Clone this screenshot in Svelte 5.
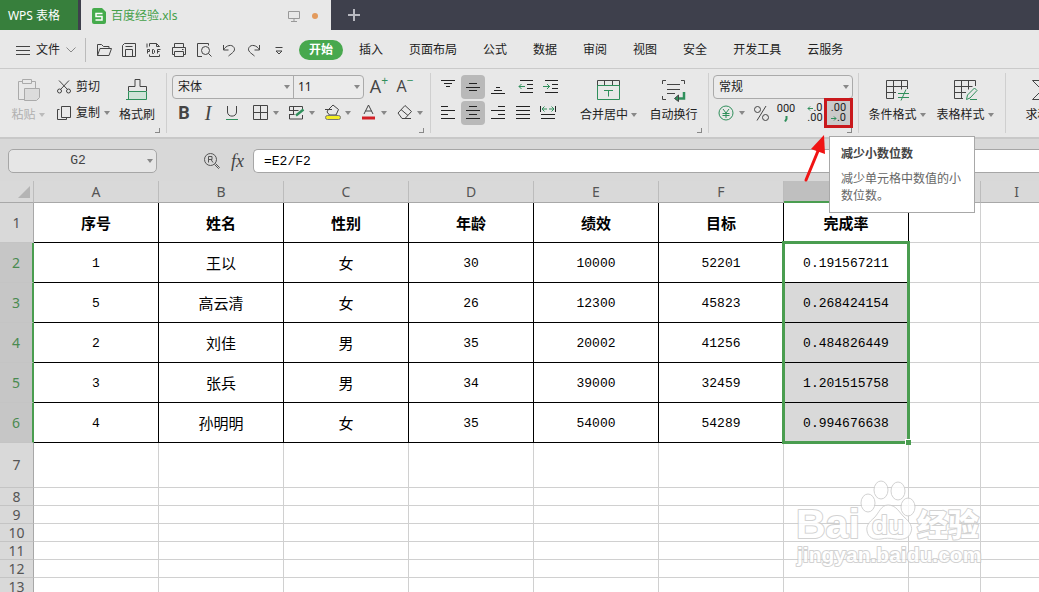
<script>
  const menus = ['插入', '页面布局', '公式', '数据', '审阅', '视图', '安全', '开发工具', '云服务'];

  const quickTools = [
    ['open', '打开'],
    ['save', '保存'],
    ['pdf', '输出为PDF'],
    ['print', '打印'],
    ['preview', '打印预览'],
    ['undo', '撤销'],
    ['redo', '恢复'],
    ['more', '自定义']
  ];

  const columns = ['A', 'B', 'C', 'D', 'E', 'F', 'G', 'H', 'I'];

  const rows = [
    ['序号', '姓名', '性别', '年龄', '绩效', '目标', '完成率'],
    ['1', '王以', '女', '30', '10000', '52201', '0.191567211'],
    ['5', '高云清', '女', '26', '12300', '45823', '0.268424154'],
    ['2', '刘佳', '男', '35', '20002', '41256', '0.484826449'],
    ['3', '张兵', '男', '34', '39000', '32459', '1.201515758'],
    ['4', '孙明明', '女', '35', '54000', '54289', '0.994676638'],
    [], [], [], [], [], [], []
  ];

  let cellName = $state('G2');
  let formula = $state('=E2/F2');

  const g = 'stroke="#2f8f5b"';
  const icons = {
    menu: '<path d="M1 4.500h14M1 8.500h14M1 12.500h14"/>',
    open: '<path d="M1.500 13.500v-11h4l2 2h5.500v2M1.500 13.500l2.500-7h11.500l-2.500 7z"/>',
    save: '<path d="M1.500 14.500v-11l2-2h11v13zM4.500 14.500v-7h7v7M4.500 4.500h7"/>',
    pdf: '<path d="M3.500 4.500v-3h7l3 3M10.500 1.500v3h3M1 1.500v4M3.500 12.500v2h10v-2M1.500 11.500v-4h2v2h-2M6.500 7.500v4h1l1-1v-2l-1-1zM11.500 11.500v-4h3M11.500 9.500h2"/>',
    print: '<path d="M3.500 5.500v-4h9v4M3.500 12.500h-2v-7h13v7h-2M3.500 9.500h9v5h-9zM11 7.500h1.500"/>',
    preview: '<path d="M6 14.500h-4.500v-13h11v2M12.500 11.500l3 3"/><circle cx="9.500" cy="8.500" r="4"/>',
    undo: '<path d="M2.500 3v5h5M2.500 8C5 3 11 2 13 5.500S11 11 7.500 14"/>',
    redo: '<path d="M13.500 3v5h-5M13.500 8C11 3 5 2 3 5.500S5 11 8.500 14"/>',
    more: '<path d="M4.500 5.500h7M5 9l3 3 3-3z"/>',
    cut: '<path d="M3 1.500l8.500 9M13 1.500l-8.500 9"/><circle cx="3.500" cy="12" r="2"/><circle cx="12.500" cy="12" r="2"/>',
    copy: '<path d="M5.500 1.500h9v11h-9zM3.500 4.500h-2v10h9v-2"/>',
    under: `<path d="M3.500 1v6c0 5.500 9 5.500 9 0V1"/><path d="M2 14.500h12" ${g}/>`,
    grid: '<path d="M1.500 1.500h14v14h-14zM8.500 1.500v14M1.500 8.500h14"/>',
    drawgrid: `<path d="M1.500 7V2.500h13V5M1.500 10v5h13v-4M1.500 6.500h9M1.500 10.500h5M5.500 2.500v8"/><path d="M8 11.500l7.500-6" ${g} stroke-width="2.500"/>`,
    fill: '<path d="M4 6l5-5 5.500 4.500-2.500 5.500h-6.500L3 8zM1 5.500h7"/><rect x="1.500" y="11.500" width="15" height="4" rx="2" fill="#f4ee22" stroke="#777"/>',
    color: '<path d="M4 10l4.500-9 4.500 9M5.500 7h6"/><path d="M2 14h13" stroke="#d21f26" stroke-width="3"/>',
    erase: '<path d="M2 9l7-7.500 6.500 6-6.500 7h-3zM5 5.500l7 6M7 14.500h8"/>',
    atop: '<path d="M1 1.500h14M4 4.500h8M6 7.500h4" stroke="#222"/>',
    amid: '<path d="M4 4.500h8M1 8.500h14M4 11.500h8" stroke="#222"/>',
    abot: '<path d="M6 8.500h4M4 11.500h8M1 14.500h14" stroke="#222"/>',
    aleft: '<path d="M1 1.500h7M1 5.500h14M1 9.500h7M1 13.500h14" stroke="#222"/>',
    acenter: '<path d="M4 1.500h8M1 5.500h14M4 9.500h8M1 13.500h14" stroke="#222"/>',
    aright: '<path d="M8 1.500h7M1 5.500h14M8 9.500h7M1 13.500h14" stroke="#222"/>',
    ajust: '<path d="M1 1.500h14M1 5.500h14M1 9.500h14M1 13.500h14" stroke="#222"/>',
    outdent: `<path d="M2 1.500h13M9 5.500h6M9 9.500h6M2 13.500h13" stroke="#222"/><path d="M1 7.500h6M3.500 5l-2.500 2.500 2.500 2.500" ${g}/>`,
    indent: `<path d="M2 1.500h13M9 5.500h6M9 9.500h6M2 13.500h13" stroke="#222"/><path d="M0 7.500h7M4 5l2.500 2.500-2.500 2.500" ${g}/>`,
    spread: `<path d="M.5 1v6M15.500 1v6M1 9.500h14M1 13.500h14" stroke="#222"/><path d="M2 4h5M9 4h5M4.500 1.500l-2.500 2.500 2.500 2.500M11.500 1.500l2.500 2.500-2.500 2.500" ${g}/>`,
    yuan: `<circle cx="8" cy="8" r="7" ${g}/><path d="M5 4l3 4 3-4M4.500 8.500h7M4.500 10.500h7M8 8v5" ${g}/>`,
    percent: '<circle cx="4.500" cy="4.500" r="3"/><circle cx="12.500" cy="12.500" r="3"/><path d="M13 1L4 15.500"/>'
  };

  const bigIcons = {
    paste: '<g stroke="#aaa"><path d="M7 4.500H3.500v18H9M17 4.500h3.500V11M7.500 2.500h9v4h-9z"/><path d="M9.500 11.500h15v9l-3 3h-12z" fill="#dcdcdc"/></g>',
    brush: `<path d="M4.500 14v-4.500h6.500V2.500h5v7h6.500V14"/><path d="M4.500 14.500h18v8h-18z" fill="#cfe3d8" ${g}/><path d="M2 22.500h8" ${g}/>`,
    merge: `<path d="M2.500 9V3.500h22V9M9.500 3.500v5M17.500 3.500v5"/><path d="M2.500 8.500h22v14h-22zM9 13.500h9M13.500 13.500v6" ${g}/>`,
    wrap: `<path d="M2.500 7V3.500H6M21 3.500h3.500V7M2.500 19v3.500H6M7 7.500h13M7 12.500h13M7 16.500h8"/><path d="M24 15v6.500h-8" ${g} stroke-width="2.500"/><path d="M18.500 18l-4 3.500 4 3z" fill="#2f8f5b"/>`,
    cond: `<path d="M10 21.500H2.500V3.500h21V12M2.500 9.500h21M2.500 15.500H12M9.500 3.500v18M17.500 3.500v9"/><path d="M14 16.500h11M14 20.500h11M22 12.500l-5 11" ${g}/>`,
    style: `<path d="M11 21.500H2.500V3.500h21V9M2.500 9.500h18M2.500 15.500H14M9.500 3.500v18M16.500 3.500v9"/><path d="M14.500 22.500l1-4.500 7-7 2.500 2.500-7 7.500zM18 22.500h7" ${g}/>`,
    sum: '<path d="M23.500 6V3.500H3.500L13 13 3.500 22.500h20V20"/>'
  };
</script>

{#snippet icon(name, size = 16)}
  <svg class="icon" width={size} height={size} viewBox="0 0 {size} {size}" aria-hidden="true">{@html icons[name]}</svg>
{/snippet}

{#snippet caret()}<span class="caret" aria-hidden="true"></span>{/snippet}

{#snippet big(name, label, drop = true, disabled = false)}
  <button class="big" {disabled}>
    <svg class="icon" width="27" height="26" viewBox="0 0 27 26" aria-hidden="true">{@html bigIcons[name]}</svg>
    <span class="label">{label}{#if drop}{@render caret()}{/if}</span>
  </button>
{/snippet}

<div class="app">
  <header class="tabs">
    <button class="brand">WPS 表格</button>
    <div class="doc">
      <svg width="14" height="16" viewBox="0 0 14 16" aria-hidden="true">
        <path d="M2 0h8l4 4v10a2 2 0 0 1-2 2H2a2 2 0 0 1-2-2V2a2 2 0 0 1 2-2z" fill="#45ab4c" />
        <path d="M10.500 5.500H4v3h6v3.500H3.500" fill="none" stroke="#fff" stroke-width="1.500" />
      </svg>
      <span class="doc-name">百度经验.xls</span>
      <svg width="12" height="12" viewBox="0 0 12 12" fill="none" stroke="#999" aria-hidden="true">
        <path d="M.5 1.500h11v7H.5zM6 8.500v3M3 11.500h6" />
      </svg>
      <span class="dot"></span>
    </div>
    <button class="plus" aria-label="新建">
      <svg width="12" height="12" viewBox="0 0 12 12" aria-hidden="true"><path d="M6 0v12M0 6h12" stroke="#b8b9c0" stroke-width="2" /></svg>
    </button>
  </header>

  <nav class="menu">
    <button class="file">
      {@render icon('menu')}
      <span>文件</span>
      <svg width="10" height="6" viewBox="0 0 10 6" fill="none" stroke="#888" aria-hidden="true"><path d="M.5.500l4.500 4.500L9.500.500" /></svg>
    </button>
    <div class="quick">
      {#each quickTools as [name, label]}
        <button aria-label={label}>{@render icon(name)}</button>
      {/each}
    </div>
    <button class="pill">开始</button>
    {#each menus as item}
      <button class="item">{item}</button>
    {/each}
  </nav>

  <section class="ribbon">
    <div class="group clipboard">
      {@render big('paste', '粘贴', true, true)}
      <div class="stack">
        <div class="line"><button class="text">{@render icon('cut')}剪切</button></div>
        <div class="line"><button class="text">{@render icon('copy')}复制{@render caret()}</button></div>
      </div>
      {@render big('brush', '格式刷', false)}
      <span class="launch"></span>
    </div>

    <div class="group font">
      <div class="stack">
        <div class="line">
          <div class="combo pair">
            <span class="field name"><select aria-label="字体"><option>宋体</option></select>{@render caret()}</span>
            <span class="field size"><select aria-label="字号"><option>11</option></select>{@render caret()}</span>
          </div>
          <button class="tool grow" aria-label="增大字号">A<sup>+</sup></button>
          <button class="tool grow" aria-label="减小字号">A<sup>−</sup></button>
        </div>
        <div class="line">
          <button class="tool bold" aria-label="加粗">B</button>
          <button class="tool italic" aria-label="倾斜">I</button>
          <button class="tool" aria-label="下划线">{@render icon('under')}</button>
          <div class="splits">
            {#each [['grid', '边框'], ['drawgrid', '绘图边框'], ['fill', '填充颜色'], ['color', '字体颜色'], ['erase', '清除']] as [name, label]}
              <button class="split" aria-label={label}>{@render icon(name, 18)}{@render caret()}</button>
            {/each}
          </div>
        </div>
      </div>
      <span class="launch"></span>
    </div>

    <div class="group align">
      <div class="stack">
        <div class="line">
          <button class="tool" aria-label="顶端对齐">{@render icon('atop')}</button>
          <button class="tool on" aria-label="垂直居中">{@render icon('amid')}</button>
          <button class="tool" aria-label="底端对齐">{@render icon('abot')}</button>
          <div class="indents">
            <button class="tool" aria-label="减少缩进">{@render icon('outdent')}</button>
            <button class="tool" aria-label="增加缩进">{@render icon('indent')}</button>
          </div>
        </div>
        <div class="line">
          <button class="tool" aria-label="左对齐">{@render icon('aleft')}</button>
          <button class="tool on" aria-label="水平居中">{@render icon('acenter')}</button>
          <button class="tool" aria-label="右对齐">{@render icon('aright')}</button>
          <button class="tool" aria-label="两端对齐">{@render icon('ajust')}</button>
          <button class="tool" aria-label="分散对齐">{@render icon('spread')}</button>
        </div>
      </div>
      <div class="bigs">
        {@render big('merge', '合并居中')}
        {@render big('wrap', '自动换行', false)}
      </div>
      <span class="launch"></span>
    </div>

    <div class="group number">
      <div class="stack">
        <div class="line">
          <div class="combo single">
            <span class="field"><select aria-label="数字格式"><option>常规</option></select>{@render caret()}</span>
          </div>
        </div>
        <div class="line">
          <button class="split" aria-label="货币">{@render icon('yuan')}{@render caret()}</button>
          <button class="tool" aria-label="百分比">{@render icon('percent', 17)}</button>
          <button class="digits" aria-label="千位分隔">
            <span>000</span>
            <svg width="6" height="9" viewBox="0 0 6 9" aria-hidden="true"><path d="M3.500 2v3L2 7.500" stroke-width="2" /></svg>
          </button>
          <button class="digits add" aria-label="增加小数位数">
            <span><svg width="6" height="7" viewBox="0 0 6 7" aria-hidden="true"><path d="M6 3.500H1M3 1.500l-2 2 2 2" /></svg>.0</span><span>.00</span>
          </button>
          <div class="marked">
            <button class="digits" aria-label="减少小数位数" aria-describedby="tip">
              <span>.00</span><span><svg width="6" height="7" viewBox="0 0 6 7" aria-hidden="true"><path d="M0 3.500h5M3 1.500l2 2-2 2" /></svg>.0</span>
            </button>
            <svg class="pointer" width="24" height="50" viewBox="0 0 24 50" aria-hidden="true">
              <path d="M3 46L15 17" stroke="#f01414" stroke-width="3" stroke-linecap="round" />
              <path d="M21 1L8 15l14 5z" fill="#f01414" />
            </svg>
            <div class="tip" id="tip" role="tooltip">
              <strong>减少小数位数</strong>
              <p>减少单元格中数值的小数位数。</p>
            </div>
          </div>
        </div>
      </div>
      <span class="launch"></span>
    </div>

    <div class="group styles">
      {@render big('cond', '条件格式')}
      {@render big('style', '表格样式')}
    </div>
    <div class="group last">
      {@render big('sum', '求和')}
    </div>
  </section>

  <section class="formula">
    <div class="cell-name">
      <input aria-label="名称框" bind:value={cellName} />
      {@render caret()}
    </div>
    <div class="fx">
      <button aria-label="查找">
        <svg width="18" height="18" viewBox="0 0 18 18" fill="none" stroke="#555" aria-hidden="true">
          <circle cx="7.500" cy="7.500" r="6" /><path d="M5.500 10.500v-6h3.500v3H5.500M8 7.500l2 3M12.500 11.500l4 4-1 1-4-4" />
        </svg>
      </button>
      <button class="fn" aria-label="插入函数">fx</button>
    </div>
    <input class="expr" aria-label="编辑栏" bind:value={formula} />
  </section>

  <main class="sheet">
    <table>
      <colgroup>
        <col class="c-index" />
        {#each columns as col, i}
          <col class={i < 7 ? 'c-wide' : i === 7 ? 'c-slim' : ''} />
        {/each}
      </colgroup>
      <thead>
        <tr>
          <th class="corner"><svg width="12" height="12" viewBox="0 0 12 12" aria-hidden="true"><path d="M12 0v12H0z" fill="#b4b4b4" /></svg></th>
          {#each columns as col}
            <th scope="col" class:picked={col === 'G'}>{col}</th>
          {/each}
        </tr>
      </thead>
      <tbody>
        {#each rows as row, r}
          <tr class={r < 6 ? 'data' : r === 6 ? 'tall' : 'plain'} class:title={r === 0}>
            <th scope="row" class:picked={r > 0 && r < 6}>{r + 1}</th>
            {#each columns as col, c}
              <td class:ruled={r < 6 && c < 7} class:shade={c === 6 && r > 1 && r < 6} class:cjk={c === 1 || c === 2}>
                {row[c] ?? ''}
                {#if r === 1 && c === 6}<span class="selection"></span>{/if}
              </td>
            {/each}
          </tr>
        {/each}
      </tbody>
    </table>

    <svg class="mark" width="190" height="92" viewBox="0 0 190 92" aria-hidden="true">
      <g fill="#fff" stroke="#c8c8c8">
        <ellipse cx="73" cy="23" rx="7" ry="9" />
        <ellipse cx="86" cy="10" rx="7" ry="9" />
        <ellipse cx="103" cy="11" rx="7" ry="9" />
        <ellipse cx="113" cy="27" rx="7" ry="9" />
        <path d="M93 25c8 0 11 7 16 12 6 5 9 10 7 15-2 7-9 8-16 7-5-1-10-1-14 0-7 1-13-1-14-8-1-5 2-9 7-13 5-5 7-13 14-13z" />
        <text class="mark-main" x="1" y="58">Bai</text>
        <text class="mark-du" x="77" y="54">du</text>
        <text class="mark-cn" x="122" y="56">经验</text>
        <text class="mark-url" x="2" y="82">jingyan.baidu.com</text>
      </g>
    </svg>
  </main>
</div>

<style>
  :global(body) {
    margin: 0;
  }

  .app {
    display: flex;
    flex-direction: column;
    height: 100vh;
    overflow: hidden;
    color: #222;
    background: #fff;
    font: 12px/16px 'Noto Sans', 'Noto Sans CJK SC', sans-serif;
  }

  button, input, select {
    margin: 0;
    padding: 0;
    border: 0;
    border-radius: 0;
    background: none;
    color: inherit;
    font: inherit;
    white-space: nowrap;
  }

  button {
    display: flex;
    flex: none;
    align-items: center;
    justify-content: center;
  }

  svg {
    display: block;
    flex: none;
  }

  .icon {
    fill: none;
    stroke: #444;
  }

  .caret {
    flex: none;
    border: 3px solid transparent;
    border-top: 4px solid #888;
    border-bottom: 0;
  }

  /* Title bar */
  .tabs {
    display: flex;
    flex: none;
    height: 30px;
    background: #3e404c;
  }

  .brand {
    width: 78px;
    padding: 2px 10px 0 0;
    background: #377f3c;
    color: #fff;
  }

  .doc {
    display: flex;
    align-items: center;
    gap: 12px;
    width: 250px;
    box-sizing: border-box;
    margin-left: 3px;
    padding: 2px 13px 0 11px;
    background: #e8e8e8;
    color: #45a04a;
  }

  .doc-name {
    flex: 1;
    margin-left: -7px;
  }

  .dot {
    width: 6px;
    height: 6px;
    border-radius: 50%;
    background: #e39a5c;
  }

  .plus {
    width: 45px;
  }

  /* Menu bar */
  .menu {
    display: flex;
    flex: none;
    align-items: center;
    box-sizing: border-box;
    height: 38px;
    padding-top: 2px;
    background: #e8e8e8;
  }

  .file {
    gap: 5px;
    height: 24px;
    padding: 0 9px 0 15px;
    border-right: 1px solid #bbb;
  }

  .file span {
    margin-right: 1px;
  }

  .quick {
    display: flex;
    padding: 0 8px 0 5px;
  }

  .quick button {
    width: 25px;
    height: 24px;
  }

  .pill {
    width: 44px;
    height: 20px;
    margin-right: 3px;
    border-radius: 10px;
    background: #48a84e;
    color: #fff;
    font-weight: bold;
  }

  .item {
    height: 24px;
    padding: 0 13px;
  }

  /* Ribbon */
  .ribbon {
    position: relative;
    z-index: 2;
    display: flex;
    flex: none;
    height: 68px;
    border-top: 1px solid #cacaca;
    border-bottom: 2px solid #c8c8c8;
    background: #e8e8e8;
  }

  .group {
    position: relative;
    display: flex;
    flex: none;
    box-sizing: border-box;
  }

  .group:not(.last)::after {
    content: '';
    position: absolute;
    top: 4px;
    right: 0;
    bottom: 4px;
    width: 1px;
    background: #cfcfcf;
  }

  .clipboard {
    width: 167px;
    padding-left: 9px;
  }

  .font {
    width: 264px;
    padding-left: 5px;
  }

  .align {
    width: 278px;
    padding-left: 5px;
  }

  .number {
    width: 150px;
    padding-left: 4px;
  }

  .styles {
    width: 147px;
    padding-left: 4px;
  }

  .last {
    padding-left: 2px;
  }

  .launch {
    position: absolute;
    right: 7px;
    bottom: 4px;
    width: 4px;
    height: 4px;
    border: solid #888;
    border-width: 0 1px 1px 0;
  }

  .big {
    flex-direction: column;
    justify-content: flex-start;
    min-width: 38px;
    padding-top: 8px;
  }

  .big .label {
    display: flex;
    align-items: center;
    gap: 3px;
    height: 24px;
  }

  .big:disabled {
    color: #b0b0b0;
  }

  .big:disabled .caret {
    border-top-color: #bbb;
  }

  .clipboard .stack {
    width: 54px;
    padding: 5px 8px 0 9px;
  }

  .align .big,
  .styles .big,
  .last .big {
    width: 68px;
  }

  .bigs {
    display: flex;
    margin-left: 13px;
  }

  .align .big {
    width: 65px;
  }

  .stack {
    padding-top: 5px;
  }

  .line {
    display: flex;
    align-items: center;
    height: 26px;
  }

  .text {
    gap: 4px;
  }

  .combo {
    display: flex;
    box-sizing: border-box;
    height: 24px;
    border: 1px solid #aaa;
    border-radius: 4px;
    background: #ebebeb;
  }

  .pair {
    width: 192px;
  }

  .single {
    width: 140px;
  }

  .field {
    display: flex;
    flex: 1;
    align-items: center;
    padding: 0 3px 0 5px;
  }

  .field select {
    flex: 1;
    min-width: 0;
    height: 22px;
    appearance: none;
    outline: none;
  }

  .field.name {
    flex: none;
    width: 112px;
  }

  .field.size {
    border-left: 1px solid #aaa;
    padding-left: 4px;
  }

  .tool {
    width: 24px;
    height: 24px;
  }

  .align .line {
    gap: 1px;
  }

  .indents {
    display: flex;
    gap: 1px;
    margin-left: 3px;
  }

  .tool.on {
    border-radius: 4px;
    background: #b9b9b9;
  }

  .grow {
    align-items: flex-start;
    width: 26px;
    margin-left: 2px;
    color: #444;
    font: 18px/22px 'Open Sans', sans-serif;
  }

  .grow + .grow {
    margin-left: 0;
    font-size: 16px;
  }

  .grow sup {
    color: #2f8f5b;
    font-size: 12px;
    line-height: 12px;
  }

  .bold {
    color: #444;
    font: bold 18px/20px Roboto, sans-serif;
  }

  .italic {
    color: #444;
    font: italic 20px/20px 'Liberation Serif', serif;
  }

  .splits {
    display: flex;
    margin-left: 8px;
  }

  .split {
    justify-content: flex-start;
    gap: 3px;
    width: 36px;
    height: 24px;
  }

  .number .split {
    gap: 5px;
    padding-left: 5px;
    width: 36px;
  }

  .digits {
    flex-direction: column;
    width: 26px;
    height: 24px;
    font: 11px/10px Roboto, sans-serif;
  }

  .digits span {
    display: flex;
    align-items: center;
  }

  .digits svg {
    fill: none;
    stroke: #2f8f5b;
  }

  .add {
    margin-left: 3px;
  }

  .marked {
    position: relative;
    display: flex;
    flex: none;
    margin-left: -4px;
  }

  .marked .digits {
    box-sizing: border-box;
    width: 29px;
    height: 30px;
    border: 3px solid #c9191d;
    background: #cacaca;
  }

  .pointer {
    position: absolute;
    top: 36px;
    right: 26px;
    fill: none;
  }

  .tip {
    position: absolute;
    top: 38px;
    left: 5px;
    box-sizing: border-box;
    width: 146px;
    padding: 8px 11px;
    border: 1px solid #a8a8a8;
    background: #fff;
    color: #666;
    line-height: 17px;
  }

  .tip strong {
    color: #444;
  }

  .tip p {
    margin: 8px 0 0;
  }

  /* Formula bar */
  .formula {
    display: flex;
    flex: none;
    align-items: center;
    height: 42px;
    padding-left: 8px;
    background: #d8d8d8;
    font: 13px/20px 'Liberation Mono', monospace;
  }

  .cell-name {
    display: flex;
    align-items: center;
    box-sizing: border-box;
    width: 149px;
    height: 24px;
    margin-top: 2px;
    padding: 0 3px 0 0;
    border: 1px solid #a6a6a6;
    border-radius: 5px;
    background: #e6e6e6;
  }

  .cell-name input {
    flex: 1;
    min-width: 0;
    color: #444;
    text-align: center;
  }

  .fx {
    display: flex;
    align-items: center;
    justify-content: flex-end;
    gap: 8px;
    width: 96px;
    box-sizing: border-box;
    padding: 2px 9px 0 0;
  }

  .fn {
    color: #444;
    font: italic 18px/20px 'Liberation Serif', serif;
  }

  .fx button:first-child {
    margin-right: 2px;
  }

  .expr {
    flex: 1;
    min-width: 0;
    box-sizing: border-box;
    height: 24px;
    margin-top: 2px;
    padding-left: 10px;
    border: 1px solid #a6a6a6;
    border-right: 0;
    border-radius: 5px 0 0 5px;
    background: #fff;
    color: #000;
  }

  /* Sheet */
  .sheet {
    position: relative;
    flex: 1;
    min-height: 0;
    overflow: hidden;
  }

  table {
    width: 100%;
    min-width: 1053px;
    table-layout: fixed;
    border-spacing: 0;
  }

  .c-index {
    width: 34px;
  }

  .c-wide {
    width: 125px;
  }

  .c-slim {
    width: 72px;
  }

  th, td {
    box-sizing: border-box;
    padding: 0;
    border: solid #d0d0d0;
    border-width: 0 1px 1px 0;
    text-align: center;
    vertical-align: middle;
  }

  th {
    background: #d9d9d9;
    color: #555;
    font: 14px/14px 'Noto Sans', sans-serif;
  }

  thead th {
    height: 22px;
    border-color: #bcbcbc;
    border-bottom-color: #a8a8a8;
  }

  tbody th {
    border-color: #c4c4c4;
    border-right-color: #a8a8a8;
  }

  .corner svg {
    margin-left: 18px;
  }

  .picked {
    background: #bfbfbf;
  }

  thead .picked {
    border-bottom: 2px solid #4a9d50;
  }

  tbody .picked {
    background: #c6c6c6;
    border-right: 2px solid #4a9d50;
    color: #4a8a50;
  }

  td {
    position: relative;
    color: #000;
    font: 13px/16px 'Liberation Mono', monospace;
  }

  .data td {
    padding-top: 2px;
  }

  .data .cjk,
  .title td {
    padding-top: 0;
    font: 15px/16px 'Noto Sans CJK SC', sans-serif;
  }

  .data.title td {
    padding-top: 0;
    font-weight: bold;
  }

  .data > * {
    height: 40px;
  }

  .tall > * {
    height: 45px;
  }

  .plain > * {
    height: 18px;
  }

  .ruled {
    border-color: #000;
  }

  .shade {
    background: #d9d9d9;
  }

  .selection {
    position: absolute;
    z-index: 1;
    top: -2px;
    left: -2px;
    box-sizing: border-box;
    width: 128px;
    height: 203px;
    border: 3px solid #4a9d50;
  }

  .selection::after {
    content: '';
    position: absolute;
    right: -4px;
    bottom: -4px;
    width: 5px;
    height: 5px;
    border: solid #fff;
    border-width: 1px 0 0 1px;
    background: #4a9d50;
  }

  .mark {
    position: absolute;
    right: 54px;
    bottom: 20px;
    opacity: 0.8;
  }

  .mark text {
    paint-order: stroke;
    stroke-width: 2px;
    stroke-linejoin: round;
  }

  .mark-main {
    font: bold 41px 'Liberation Sans', sans-serif;
  }

  .mark-du {
    font: bold 26px 'Liberation Sans', sans-serif;
  }

  .mark-cn {
    font: 900 31px 'Noto Sans CJK SC', sans-serif;
  }

  .mark-url {
    font: bold 21px 'Liberation Sans', sans-serif;
  }
</style>
